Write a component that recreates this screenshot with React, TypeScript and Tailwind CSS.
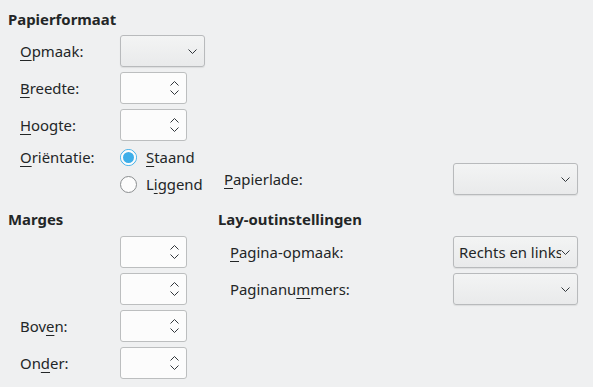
import React from 'react'

const font = { fontFamily: '"Noto Sans", "Open Sans", sans-serif' }

function Mn({ pre = '', u, post = '' }: { pre?: string; u: string; post?: string }) {
  return (
    <span>
      {pre}
      <span className="underline decoration-1 underline-offset-[3px]">{u}</span>
      {post}
    </span>
  )
}

function Chevron({ up = false }: { up?: boolean }) {
  return (
    <svg width="9" height="5" viewBox="0 0 9 5" className="block shrink-0">
      <path d={up ? 'M0.5 4.5 L4.5 0.5 L8.5 4.5' : 'M0.5 0.5 L4.5 4.5 L8.5 0.5'} fill="none" stroke="#31363b" strokeWidth="1" />
    </svg>
  )
}

function Spin() {
  return (
    <div className="w-[67px] h-[32px] rounded-[3px] border border-[#bcbebf] bg-[#fcfcfc] flex items-center justify-end pr-[7px]">
      <div className="flex flex-col gap-[4px]">
        <Chevron up />
        <Chevron />
      </div>
    </div>
  )
}

function Combo({ w, text }: { w: string; text?: string }) {
  return (
    <div className={`${w} h-[32px] rounded-[3px] border border-[#b8babc] bg-gradient-to-b from-[#f3f4f4] to-[#e9eaeb] shadow-[0_1px_1px_rgba(0,0,0,0.08)] flex items-center pl-[5px] pr-[7px] overflow-hidden`}>
      <span className="flex-1 min-w-0 whitespace-nowrap overflow-hidden">{text}</span>
      <Chevron />
    </div>
  )
}

function Radio({ checked }: { checked?: boolean }) {
  return checked ? (
    <div className="w-[17px] h-[17px] rounded-full border border-[#3daee9] bg-[#d0e9f7] flex items-center justify-center">
      <div className="w-[11px] h-[11px] rounded-full bg-[#3daee9] border-2 border-[#fcfcfc] box-content" />
    </div>
  ) : (
    <div className="w-[17px] h-[17px] rounded-full border border-[#8b8e90] bg-[#fcfcfc]" />
  )
}

export default function App() {
  return (
    <div style={font} className="w-[593px] h-[387px] bg-[#eff0f1] text-[#232627] text-[14.9px] flex overflow-hidden">
      {/* left column */}
      <div className="w-[212px] pl-[8px] pt-[7px] flex flex-col">
        <div className="font-bold h-[24px] leading-[24px]">Papierformaat</div>
        <div className="mt-[4px] flex flex-col gap-[5px] pl-[12px]">
          <div className="flex items-center h-[32px]">
            <div className="w-[100px]"><Mn u="O" post="pmaak:" /></div>
            <Combo w="w-[85px]" />
          </div>
          <div className="flex items-center h-[32px]">
            <div className="w-[100px]"><Mn u="B" post="reedte:" /></div>
            <Spin />
          </div>
          <div className="flex items-center h-[32px]">
            <div className="w-[100px]"><Mn u="H" post="oogte:" /></div>
            <Spin />
          </div>
        </div>
        <div className="pl-[12px] mt-[2px] flex items-center h-[28px]">
          <div className="w-[100px]"><Mn u="O" post="riëntatie:" /></div>
          <Radio checked />
          <div className="ml-[9px]"><Mn u="S" post="taand" /></div>
        </div>
        <div className="pl-[112px] flex items-center h-[27px]">
          <Radio />
          <div className="ml-[9px]"><Mn pre="L" u="i" post="ggend" /></div>
        </div>
        <div className="font-bold h-[24px] leading-[24px] mt-[9px]">Marges</div>
        <div className="mt-[5px] flex flex-col gap-[5px] pl-[12px]">
          <div className="flex items-center h-[32px]">
            <div className="w-[100px]" />
            <Spin />
          </div>
          <div className="flex items-center h-[32px]">
            <div className="w-[100px]" />
            <Spin />
          </div>
          <div className="flex items-center h-[32px]">
            <div className="w-[100px]"><Mn pre="Bov" u="e" post="n:" /></div>
            <Spin />
          </div>
          <div className="flex items-center h-[32px]">
            <div className="w-[100px]"><Mn pre="On" u="d" post="er:" /></div>
            <Spin />
          </div>
        </div>
      </div>

      {/* right column */}
      <div className="flex-1 flex flex-col pt-[163px] pr-[15px]">
        <div className="flex items-center h-[32px] pl-[12px]">
          <div className="flex-1"><Mn u="P" post="apierlade:" /></div>
          <Combo w="w-[125px]" />
        </div>
        <div className="font-bold h-[24px] leading-[24px] mt-[12px] pl-[6px]">Lay-outinstellingen</div>
        <div className="mt-[5px] flex flex-col gap-[5px] pl-[18px]">
          <div className="flex items-center h-[32px]">
            <div className="flex-1"><Mn u="P" post="agina-opmaak:" /></div>
            <Combo w="w-[125px]" text="Rechts en links" />
          </div>
          <div className="flex items-center h-[32px]">
            <div className="flex-1"><Mn pre="Paginanu" u="m" post="mers:" /></div>
            <Combo w="w-[125px]" />
          </div>
        </div>
      </div>
    </div>
  )
}
